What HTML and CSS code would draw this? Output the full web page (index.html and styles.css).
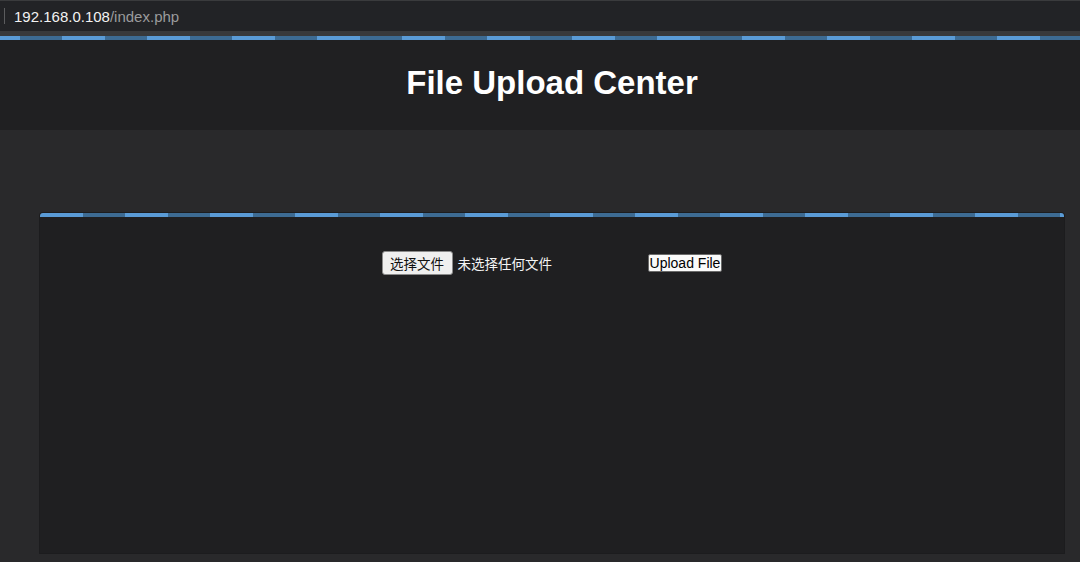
FILE: index.html
```html
<!DOCTYPE html>
<html lang="zh-CN">
<head>
<meta charset="utf-8">
<title>File Upload Center</title>
<link rel="stylesheet" href="styles.css">
</head>
<body>
<div class="chrome">
  <span class="divider"></span>
  <span class="url"><span class="host">192.168.0.108</span><span class="path">/index.php</span></span>
</div>
<div class="chrome-edge"></div>
<div class="stripe top-stripe"></div>
<header class="site-header">
  <h1 class="title">File Upload Center</h1>
</header>
<main class="content">
  <section class="panel">
    <div class="stripe panel-stripe"></div>
    <form class="upload-form">
      <div class="file-field">
        <span class="file-btn">选择文件</span>
        <span class="file-label">未选择任何文件</span>
      </div>
      <button type="button" class="submit-btn">Upload File</button>
    </form>
  </section>
</main>
</body>
</html>
```
FILE: styles.css
```css
html, body {
  margin: 0;
  padding: 0;
}
body {
  width: 1080px;
  height: 562px;
  overflow: hidden;
  background: #29292b;
  font-family: "Liberation Sans", Arial, "Noto Sans CJK SC", sans-serif;
  color: #fff;
}
.chrome {
  background: #222326;
  border-top: 1px solid #3a3b3d;
  display: flex;
  align-items: center;
  box-sizing: border-box;
  height: 31px;
}
.divider {
  width: 1px;
  height: 16px;
  background: #5b5c5e;
  margin-left: 4px;
  margin-right: 9px;
}
.url {
  font-size: 15px;
  position: relative;
  top: 0;
}
.host { color: #f2f2f2; }
.path { color: #9b9b9d; }
.chrome-edge {
  height: 5px;
  background: #38393b;
}
.stripe {
  height: 4px;
  background-image: linear-gradient(90deg, #5a9bd6 0, #5a9bd6 43px, #3d6b93 43px, #3d6b93 85px);
  background-size: 85px 4px;
  background-repeat: repeat-x;
}
.top-stripe {
  background-position: -23px 0;
}
.site-header {
  height: 90px;
  background: #202022;
  display: flex;
  align-items: center;
  justify-content: center;
  padding-left: 24px;
}
.title {
  margin: 0;
  font-size: 33px;
  font-weight: bold;
  color: #fff;
  position: relative;
  top: -2px;
}
.content {
  padding: 83px 16px 0 40px;
}
.panel {
  width: 1024px;
  height: 340px;
  background: #1f1f21;
  border-radius: 3px 3px 0 0;
  overflow: hidden;
  box-shadow: 0 0 0 1px #1c1c1e;
}
.panel-stripe {
  background-position: 0 0;
}
.upload-form {
  display: flex;
  justify-content: center;
  align-items: center;
  padding-top: 34px;
  margin: 0;
}
.file-field {
  width: 262px;
  display: flex;
  align-items: center;
  margin-right: 4px;
}
.file-btn {
  box-sizing: border-box;
  width: 71px;
  height: 24px;
  background: #efefef;
  border: 1px solid #8a8a8a;
  border-radius: 3px;
  color: #111;
  font-family: "Noto Sans CJK SC", sans-serif;
  font-size: 13.5px;
  display: flex;
  align-items: center;
  justify-content: center;
}
.file-label {
  margin-left: 5px;
  font-family: "Noto Sans CJK SC", sans-serif;
  font-size: 13.5px;
  color: #f4f4f4;
}
.submit-btn {
  box-sizing: border-box;
  height: 18px;
  padding: 0 1px;
  background: #fafafa;
  border: 1px solid #6a6a6a;
  border-radius: 2px;
  color: #000;
  font-family: "Liberation Sans", Arial, sans-serif;
  font-size: 14px;
  line-height: 16px;
}
```
